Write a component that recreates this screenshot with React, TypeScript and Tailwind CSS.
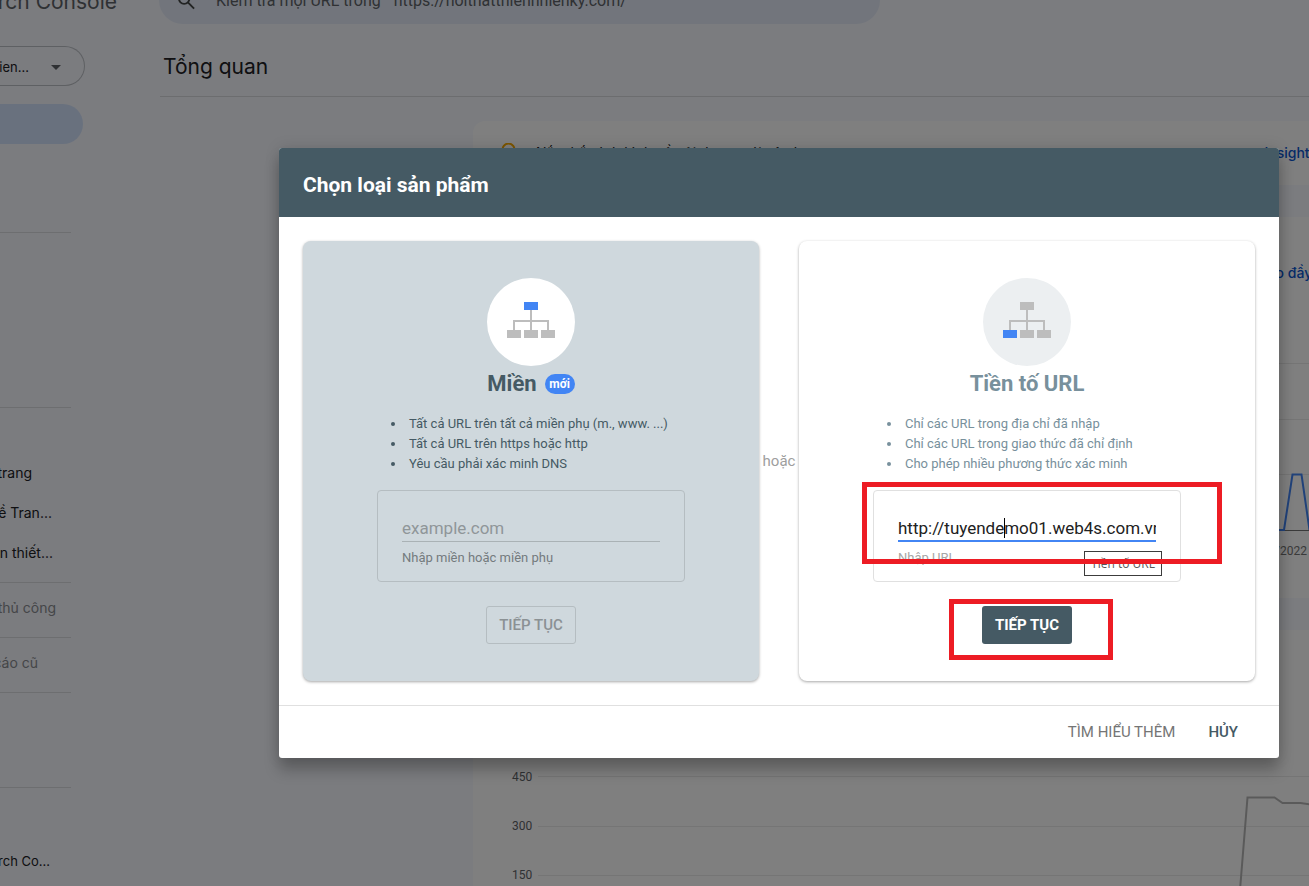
import React from "react";

const pageFont = "font-[Inter,Roboto,sans-serif]";

function SideDivider() {
  return <div className="h-px w-[71px] bg-[#dadce0]" />;
}

function SideItem({ children, muted = false }: { children: React.ReactNode; muted?: boolean }) {
  return (
    <a
      href="#"
      className={
        "flex h-10 items-center justify-end whitespace-nowrap " +
        (muted ? "text-[#8a8d91]" : "text-[#202124]")
      }
    >
      {children}
    </a>
  );
}

function Sidebar() {
  return (
    <nav className="flex w-40 shrink-0 flex-col overflow-hidden pt-[22px] text-sm" aria-label="Menu">
      <button
        type="button"
        className="flex h-10 w-[85px] items-center justify-end gap-[22px] rounded-r-full border border-l-0 border-[#bdc1c6] pt-[2px] pr-[23px] text-[13px] whitespace-nowrap text-[#202124]"
      >
        noithatthiennhien...
        <svg width="10" height="5" viewBox="0 0 10 5" className="shrink-0" aria-hidden="true">
          <path d="M0 0h10L5 5z" fill="#5f6368" />
        </svg>
      </button>
      <div className="mt-[18px] h-10 w-[83px] rounded-r-full bg-[#d3e3fd]" />
      <div className="h-[88px]" />
      <SideDivider />
      <div className="h-[174px]" />
      <SideDivider />
      <div className="flex w-[72px] flex-col pt-[45px] pb-[9px]">
        <div className="w-8"><SideItem>Trải nghiệm trên trang</SideItem></div>
        <div className="w-[52px]"><SideItem>Các chỉ số quan trọng về Tran...</SideItem></div>
        <div className="w-[53px]"><SideItem>Tính khả dụng trên thiết...</SideItem></div>
      </div>
      <SideDivider />
      <div className="w-14 pt-[5px] pb-[9px]"><SideItem muted>Bảo mật và thao tác thủ công</SideItem></div>
      <SideDivider />
      <div className="w-[38px] pt-[5px] pb-[9px]"><SideItem muted>Công cụ và báo cáo cũ</SideItem></div>
      <SideDivider />
      <div className="h-[94px]" />
      <SideDivider />
      <div className="w-[50px] pt-[53px] text-[13px]"><SideItem>Giới thiệu về Search Co...</SideItem></div>
    </nav>
  );
}

function Background() {
  return (
    <div className={"flex h-full flex-col bg-[#f6f8ff] " + pageFont}>
      <header className="flex h-6 shrink-0 items-end overflow-hidden">
        <div className="flex h-12 w-[117px] shrink-0 items-center justify-end pt-[3px] text-[21px] whitespace-nowrap text-[#5f6368]">
          Google Search Console
        </div>
        <div className="ml-[42px] flex h-12 w-[721px] items-center gap-[21px] rounded-full bg-[#e4ebf8] pt-[2px] pl-[19px] font-[Roboto,sans-serif] text-base text-[#5f6368]">
          <svg width="18" height="18" viewBox="0 0 18 18" fill="none" stroke="#444746" strokeWidth="2" aria-hidden="true">
            <circle cx="6.500" cy="6.500" r="5.500" />
            <path d="M10.500 10.500 17 17" />
          </svg>
          <input
            aria-label="Kiểm tra URL"
            className="w-full bg-transparent outline-none placeholder:text-[#5f6368]"
            placeholder='Kiểm tra mọi URL trong  "https://noithatthiennhienky.com/"'
          />
        </div>
      </header>
      <div className="flex min-h-0 flex-1">
        <Sidebar />
        <main className="flex min-w-0 flex-1 flex-col">
          <h1 className="flex h-[73px] items-center border-b border-[#d9dbdf] pt-[13px] pl-[3px] text-[21px] text-[#202124]">
            Tổng quan
          </h1>
          <div className="mt-6 ml-[313px] flex min-h-0 flex-1 flex-col gap-8 overflow-hidden">
            <section className="flex h-16 shrink-0 items-center rounded-l-xl bg-white pl-7 text-sm whitespace-nowrap text-[#202124]">
              <svg width="15" height="20" viewBox="0 0 15 20" fill="none" stroke="#f9ab00" strokeWidth="2" aria-hidden="true">
                <path d="M5 14v-2a6 6 0 1 1 5 0v2zM5 18h5" />
              </svg>
              <span className="ml-5 flex-1">Nắm bắt tình hình về nội dung mới của bạn</span>
              <a href="#" className="-mr-2 pl-5 font-medium text-[#0b57d0]">Insights</a>
            </section>
            <section className="flex h-[381px] shrink-0 flex-col rounded-l-xl bg-white text-right whitespace-nowrap">
              <div className="flex h-28 items-center justify-end">
                <a href="#" className="-mr-6 text-sm font-medium text-[#0b57d0]">Báo cáo đầy đủ</a>
              </div>
              <div className="mt-[34px] flex justify-end">
                <svg width="770" height="172" viewBox="0 0 770 172" fill="none" aria-hidden="true">
                  <path d="M0 .5h770M0 56.500h770M0 111.500h770" stroke="#ebebeb" />
                  <path d="M0 167.500h770" stroke="#757575" />
                  <path d="M0 167h745l8.500-55.500h9l8 55.500" stroke="#4285f4" strokeWidth="2" />
                </svg>
              </div>
              <div className="pt-2 pr-[2px] font-[Roboto,sans-serif] text-xs text-[#757575]">26/10/2022</div>
            </section>
            <section className="flex h-[381px] shrink-0 rounded-tl-xl bg-white pt-[122px] pl-[39px]">
              <div className="flex w-[26px] shrink-0 flex-col gap-[33px] pt-[17px] font-[Roboto,sans-serif] text-xs text-[#5f6368]">
                <span>450</span>
                <span>300</span>
                <span>150</span>
              </div>
              <svg width="772" height="200" viewBox="0 0 772 200" fill="none" className="shrink-0" aria-hidden="true">
                <path d="M0 24.500h772M0 74.500h772M0 123.500h772" stroke="#ebebeb" />
                <path d="M702 138l7.500-92.500h27l8 5.500h18l10 1.500" stroke="#b5b5b5" strokeWidth="2" />
              </svg>
            </section>
          </div>
        </main>
      </div>
    </div>
  );
}

function SiteMapIcon({ top, left, circle }: { top: string; left: string; circle: string }) {
  return (
    <svg width="88" height="88" viewBox="0 0 88 88" className="shrink-0" aria-hidden="true">
      <circle cx="44" cy="44" r="44" fill={circle} />
      <path d="M43 32h2v10h17v10h-2v-8H45v8h-2v-8H28v8h-2V42h17z" fill="#bdbdbd" />
      <path d="M37 24h14v8H37z" fill={top} />
      <path d="M20 52h14v8H20z" fill={left} />
      <path d="M37 52h14v8H37zM54 52h14v8H54z" fill="#bdbdbd" />
    </svg>
  );
}

const cardShape =
  "relative flex h-[440px] min-w-0 flex-1 flex-col items-center rounded-lg pt-[37px] shadow-[0_1px_3px_rgba(0,0,0,0.35)] ";

function Bullets({ items }: { items: string[] }) {
  return (
    <ul className="mt-[13px] list-disc self-stretch pl-[103px] text-[13px] leading-5 whitespace-nowrap">
      {items.map((item) => (
        <li key={item} className="pl-[3px]">{item}</li>
      ))}
    </ul>
  );
}

function Dialog() {
  return (
    <div
      role="dialog"
      aria-labelledby="dialog-title"
      className="w-[1000px] rounded-[3px] bg-white font-[Roboto,sans-serif] shadow-[0_12px_15px_0_rgba(0,0,0,0.24),0_0_15px_0_rgba(0,0,0,0.12)]"
    >
      <h2
        id="dialog-title"
        className="flex h-[69px] items-center rounded-t-[3px] bg-[#455a64] px-6 pt-[6px] text-[21px] font-bold text-white"
      >
        Chọn loại sản phẩm
      </h2>
      <div className="flex items-center p-6">
        <section className={cardShape + "bg-[#cfd8dd] text-[#455a64]"}>
          <SiteMapIcon circle="#ffffff" top="#4285f4" left="#bdbdbd" />
          <div className="flex h-[35px] items-center gap-2">
            <h3 className="text-[22px] font-bold">Miền</h3>
            <span className="flex h-5 w-[30px] items-center justify-center rounded-full bg-[#4285f4] text-xs font-bold text-white">
              mới
            </span>
          </div>
          <Bullets
            items={[
              "Tất cả URL trên tất cả miền phụ (m., www. ...)",
              "Tất cả URL trên https hoặc http",
              "Yêu cầu phải xác minh DNS",
            ]}
          />
          <div className="mt-4 flex h-[92px] w-[308px] flex-col rounded border border-[#b5bdc1] px-6 pt-[19px]">
            <input
              id="domain"
              placeholder="example.com"
              className="h-8 w-full border-b border-[#aab2b5] bg-transparent pt-[5px] text-[17px] outline-none placeholder:text-[#8f9699]"
            />
            <label htmlFor="domain" className="mt-[6px] text-[13px] leading-5 text-[#747b7e]">
              Nhập miền hoặc miền phụ
            </label>
          </div>
          <button
            type="button"
            className="mt-6 h-[38px] w-[90px] rounded-[3px] border border-[#b5bdc1] text-[15px] font-medium text-[#8b9194]"
          >
            TIẾP TỤC
          </button>
        </section>
        <span className="flex w-10 justify-center text-[15px] text-[#9e9e9e]">hoặc</span>
        <section className={cardShape + "bg-white text-[#78909c]"}>
          <SiteMapIcon circle="#eceff1" top="#bdbdbd" left="#4285f4" />
          <h3 className="flex h-[35px] items-center text-[22px] font-bold">Tiền tố URL</h3>
          <Bullets
            items={[
              "Chỉ các URL trong địa chỉ đã nhập",
              "Chỉ các URL trong giao thức đã chỉ định",
              "Cho phép nhiều phương thức xác minh",
            ]}
          />
          <div className="relative mt-4 flex h-[92px] w-[308px] flex-col rounded border border-[#e0e0e0] px-6 pt-[19px]">
            <input
              id="prefix"
              defaultValue="http://tuyendemo01.web4s.com.vn"
              className="h-8 w-full border-b-2 border-[#4285f4] bg-transparent pt-[5px] text-[17px] text-[#212121] outline-none"
            />
            <label htmlFor="prefix" className="mt-[6px] text-[13px] leading-5 text-[#a6a6a6]">
              Nhập URL
            </label>
            <span className="absolute top-[27px] left-[130px] h-5 w-px bg-black" />
            <span
              role="tooltip"
              className="absolute top-[60px] left-[210px] flex h-[25px] w-[78px] items-center justify-center border border-[#3c3c3c] bg-white font-['Open_Sans',sans-serif] text-xs whitespace-nowrap text-[#575757]"
            >
              Tiền tố URL
            </span>
          </div>
          <button
            type="button"
            className="mt-6 h-[38px] w-[90px] rounded-[3px] bg-[#455a64] text-[15px] font-bold text-white"
          >
            TIẾP TỤC
          </button>
          <div className="pointer-events-none absolute top-[241px] left-[63px] h-[82px] w-[360px] border-[5px] border-[#ed1c24]" />
          <div className="pointer-events-none absolute top-[358px] left-[150px] h-[61px] w-[164px] border-[5px] border-[#ed1c24]" />
        </section>
      </div>
      <div className="flex h-[53px] items-center justify-end gap-[33px] border-t border-[#e0e0e0] pr-[41px] text-[15px]">
        <button type="button" className="text-[#757575]">TÌM HIỂU THÊM</button>
        <button type="button" className="font-medium text-[#455a64]">HỦY</button>
      </div>
    </div>
  );
}

export default function App() {
  return (
    <div className="relative h-screen overflow-hidden">
      <Background />
      <div className="absolute inset-0 flex items-start justify-end bg-black/50 pt-[148px] pr-[30px]">
        <Dialog />
      </div>
    </div>
  );
}
